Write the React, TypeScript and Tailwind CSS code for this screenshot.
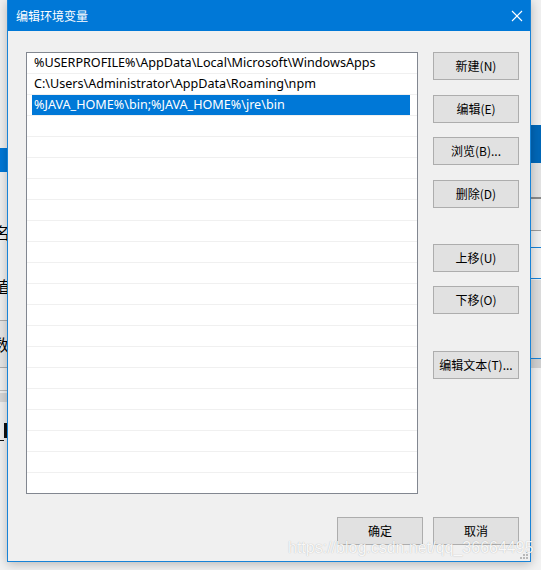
import React from 'react';

// ── ICONS ──
const CloseIcon = () => (
    <svg width="12" height="12" viewBox="0 0 12 12" fill="none" stroke="white" strokeWidth="1.1">
        <line x1="1" y1="1" x2="11" y2="11" />
        <line x1="11" y1="1" x2="1" y2="11" />
    </svg>
);

const SizeGrip = () => (
    <svg width="10" height="10" viewBox="0 0 10 10" fill="#b8b8b8">
        <rect x="7" y="1" width="2" height="2" />
        <rect x="4" y="4" width="2" height="2" />
        <rect x="7" y="4" width="2" height="2" />
        <rect x="1" y="7" width="2" height="2" />
        <rect x="4" y="7" width="2" height="2" />
        <rect x="7" y="7" width="2" height="2" />
    </svg>
);

const cjk = '[font-family:"Microsoft_YaHei_UI","Noto_Sans_CJK_SC",sans-serif]';

function Btn({ label, className = '' }: { label: string; className?: string }) {
    return (
        <div
            className={`w-[86px] h-[28px] shrink-0 bg-[#e1e1e1] border border-[#adadad] flex items-center justify-center text-[12px] text-black ${cjk} ${className}`}
        >
            {label}
        </div>
    );
}

const paths = [
    '%USERPROFILE%\\AppData\\Local\\Microsoft\\WindowsApps',
    'C:\\Users\\Administrator\\AppData\\Roaming\\npm',
    '%JAVA_HOME%\\bin;%JAVA_HOME%\\jre\\bin',
];

export default function App() {
    const rows = Array.from({ length: 21 }, (_, i) => paths[i] ?? '');

    return (
        <div className="relative w-[541px] h-[570px] overflow-hidden bg-[#f2f2f2]">
            {/* window behind, peeking out on the left */}
            <div className={`absolute left-0 top-0 w-[8px] h-[460px] flex flex-col items-end bg-[#f0f0f0] overflow-hidden text-[16px] leading-none text-black ${cjk}`}>
                <div className="h-[148px] w-full shrink-0" />
                <div className="h-[24px] w-full shrink-0 bg-[#0078d7]" />
                <div className="h-[52px] shrink-0" />
                <div className="h-[18px] shrink-0 -mr-[2px]">名</div>
                <div className="h-[36px] shrink-0" />
                <div className="h-[18px] shrink-0 -mr-[2px]">值</div>
                <div className="h-[24px] shrink-0" />
                <div className="h-[48px] w-full shrink-0 bg-[#e6e6e6] border-y border-[#adadad] flex items-center justify-end">
                    <span className="-mr-[1px]">数</span>
                </div>
                <div className="h-[22px] shrink-0" />
                <div className="h-px w-full shrink-0 bg-[#bdbdbd]" />
                <div className="h-[2px] shrink-0" />
                <div className="h-[9px] w-full shrink-0 bg-[#d6d6d6]" />
                <div className="h-[21px] shrink-0" />
                <div className="h-[15px] w-[3px] mr-[1px] shrink-0 bg-[#111]" />
                <div className="h-[2px] shrink-0" />
                <div className="h-px w-[4px] self-start shrink-0 bg-[#111]" />
            </div>

            {/* window behind, peeking out on the right */}
            <div className="absolute left-[531px] top-0 w-[10px] h-[380px] flex flex-col bg-[#f0f0f0]">
                <div className="h-[125px] shrink-0" />
                <div className="h-[38px] shrink-0 bg-[#0067b8]" />
                <div className="h-[34px] shrink-0 bg-[#e3e3e3]" />
                <div className="h-[2px] shrink-0 bg-[#8a8a8a]" />
                <div className="h-[31px] shrink-0 bg-[#e8e8e8]" />
                <div className="h-px shrink-0 bg-[#9a9a9a]" />
                <div className="h-[16px] shrink-0" />
                <div className="h-px shrink-0 bg-[#1883d7]" />
                <div className="h-[30px] shrink-0" />
                <div className="h-px shrink-0 bg-[#1883d7]" />
                <div className="h-px shrink-0" />
                <div className="h-[78px] shrink-0 bg-[#dcdcdc]" />
                <div className="h-px shrink-0 bg-[#1883d7]" />
                <div className="h-[9px] shrink-0 bg-[#d0d0d0]" />
            </div>

            {/* ── DIALOG ── */}
            <div className="absolute left-[7px] top-0 w-[524px] h-[562px] flex flex-col border border-t-0 border-[#1883d7] bg-[#f0f0f0] shadow-[0_2px_10px_rgba(0,0,0,0.25)]">
                {/* Title bar */}
                <div className="h-[31px] shrink-0 bg-[#0078d7] flex items-center pl-[8px] pr-[7px]">
                    <span className={`text-[12px] text-white ${cjk}`}>编辑环境变量</span>
                    <span className="ml-auto flex items-center">
                        <CloseIcon />
                    </span>
                </div>

                {/* Body */}
                <div className="relative flex-1 flex flex-col pl-[18px] pr-[11px] pt-[21px]">
                    <div className="flex items-start">
                        {/* List */}
                        <div className="w-[392px] h-[442px] shrink-0 border border-[#828790] bg-white overflow-hidden">
                            {rows.map((p, i) => (
                                <div key={i} className="h-[21px] border-b border-[#f0f0f0] flex">
                                    <div
                                        className={`w-[378px] ml-[5px] h-[20px] flex items-center pl-[2px] text-[12.6px] whitespace-nowrap [font-family:"Segoe_UI","Noto_Sans",sans-serif] ${i === 2 ? 'bg-[#0078d7] text-white' : 'text-black'}`}
                                    >
                                        {p}
                                    </div>
                                </div>
                            ))}
                        </div>

                        {/* Button column */}
                        <div className="ml-[15px] flex flex-col">
                            <Btn label="新建(N)" />
                            <Btn label="编辑(E)" className="mt-[15px]" />
                            <Btn label="浏览(B)..." className="mt-[14px]" />
                            <Btn label="删除(D)" className="mt-[15px]" />
                            <Btn label="上移(U)" className="mt-[36px]" />
                            <Btn label="下移(O)" className="mt-[14px]" />
                            <Btn label="编辑文本(T)..." className="mt-[37px]" />
                        </div>
                    </div>

                    {/* Footer buttons */}
                    <div className="mt-[23px] flex justify-end gap-[10px]">
                        <Btn label="确定" />
                        <Btn label="取消" />
                    </div>

                    <div className="absolute right-[1px] bottom-[1px]">
                        <SizeGrip />
                    </div>
                </div>
            </div>

            {/* Watermark */}
            <div className="absolute left-[288px] top-[540px] text-[16px] leading-none text-white/90 [font-family:'Liberation_Sans',Arial,sans-serif] [text-shadow:0_0_1px_rgba(0,0,0,0.3)] whitespace-nowrap">
                https://blog.csdn.net/qq_36664495
            </div>
        </div>
    );
}
